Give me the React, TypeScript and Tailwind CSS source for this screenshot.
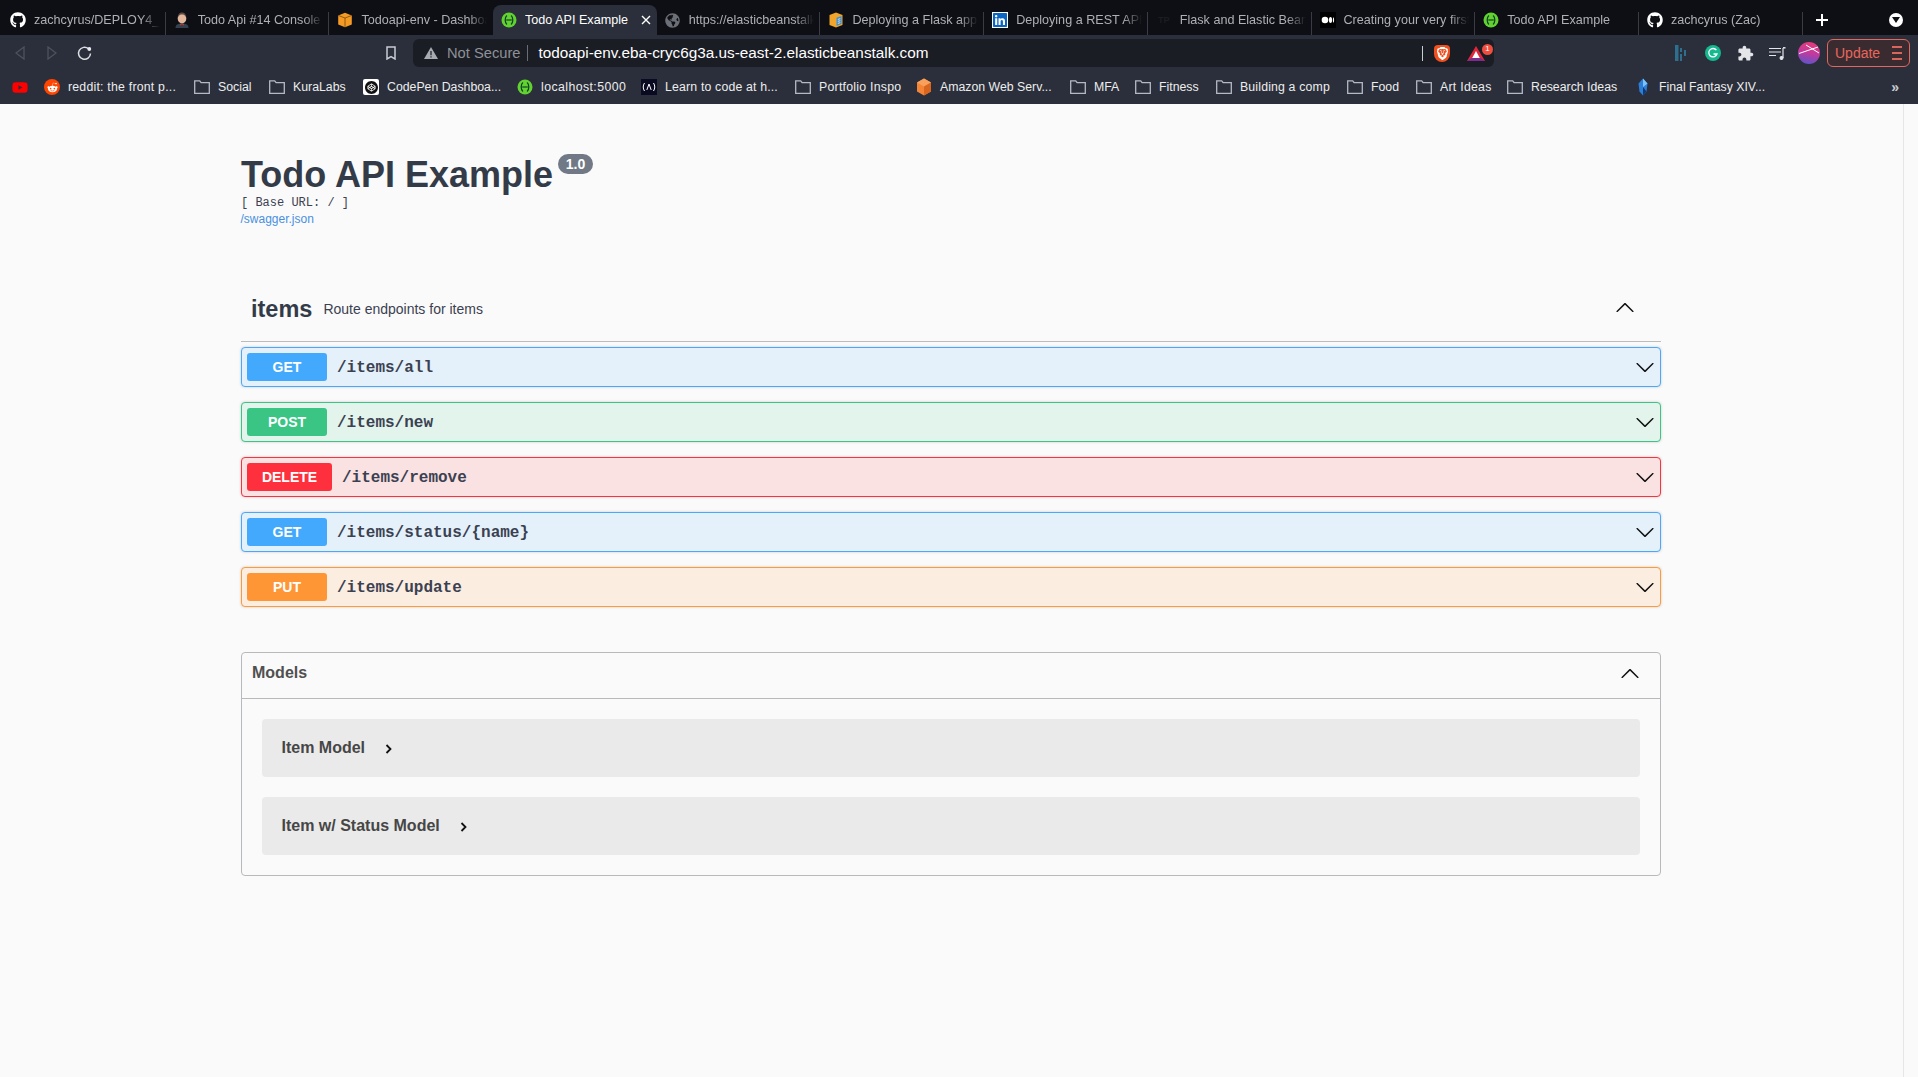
import React from "react";
import { FaGithub, FaYoutube, FaRedditAlien, FaLinkedin, FaGlobeAmericas } from "react-icons/fa";
import { SiBrave, SiCodepen } from "react-icons/si";

const Swagger = () => (
  <svg width="16" height="16" viewBox="0 0 16 16">
    <circle cx="8" cy="8" r="7.5" fill="#62d32e" />
    <path d="M6 3.500C3.600 5 3.600 11 6 12.500M10 3.500c2.400 1.500 2.400 7.500 0 9" fill="none" stroke="#14402f" strokeWidth="1.300" />
    <path d="M5.200 8h5.600" stroke="#14402f" strokeWidth="1.200" />
  </svg>
);
const Github = () => <FaGithub size={16} color="#ffffff" />;
const Jenkins = () => (
  <svg width="16" height="16" viewBox="0 0 16 16">
    <path d="M1.500 16c0-3.500 2.500-4.500 6.500-4.500s6.500 1 6.500 4.500z" fill="#33414f" />
    <ellipse cx="8" cy="6.500" rx="4.300" ry="5" fill="#e3b79b" />
    <path d="M3.700 5.500C4 1.500 6 .5 8 .5s4 1 4.300 5C11 3 9.500 2.500 8 2.500S5 3 3.700 5.500z" fill="#5b4a45" />
    <path d="M6 11.500l2 1 2-1v2l-2-.7-2 .7z" fill="#c0342f" />
  </svg>
);
const AwsBox = () => (
  <svg width="16" height="16" viewBox="0 0 16 16">
    <path d="M8 .8l6.800 2.600v9.200L8 15.200 1.200 12.600V3.400z" fill="#f59a23" />
    <path d="M1.200 3.400L8 6l6.800-2.600M8 6v9.200" fill="none" stroke="#7a4a0e" strokeWidth=".8" />
  </svg>
);
const FlaskDoc = () => (
  <svg width="16" height="16" viewBox="0 0 16 16">
    <path d="M8 .5l6.500 2.500v10L8 15.500 1.500 13V3z" fill="#f2a52b" />
    <path d="M8.500 5.800l5-1.800v8l-5 2z" fill="#3f8fd2" />
    <path d="M9.800 7.500l2.500-.9M9.800 9.500l2.500-.9M9.800 11.500l2.500-.9" stroke="#ffffff" strokeWidth=".7" />
  </svg>
);
const MediumIcon = () => (
  <svg width="16" height="16" viewBox="0 0 16 16">
    <rect width="16" height="16" fill="#000000" />
    <ellipse cx="5" cy="8" rx="3.300" ry="3.300" fill="#ffffff" />
    <ellipse cx="10.500" cy="8" rx="1.600" ry="3" fill="#ffffff" />
    <ellipse cx="13.500" cy="8" rx=".6" ry="2.700" fill="#ffffff" />
  </svg>
);
const TpIcon = () => (
  <span className="w-4 text-center text-[9px] font-bold leading-none text-[#1c1d20]">TP</span>
);

type Tab = { icon: React.ReactNode; title: string; active?: boolean; noDiv?: boolean };
const tabs: Tab[] = [
  { icon: <Github />, title: "zachcyrus/DEPLOY4_Flask" },
  { icon: <Jenkins />, title: "Todo Api #14 Console [Jenkins]" },
  { icon: <AwsBox />, title: "Todoapi-env - Dashboard", noDiv: true },
  { icon: <Swagger />, title: "Todo API Example", active: true, noDiv: true },
  { icon: <FaGlobeAmericas size={15} color="#6c6f76" />, title: "https://elasticbeanstalk.com" },
  { icon: <FlaskDoc />, title: "Deploying a Flask application" },
  { icon: <FaLinkedin size={16} color="#0a66c2" className="bg-white" />, title: "Deploying a REST API with" },
  { icon: <TpIcon />, title: "Flask and Elastic Beanstalk" },
  { icon: <MediumIcon />, title: "Creating your very first app" },
  { icon: <Swagger />, title: "Todo API Example" },
  { icon: <Github />, title: "zachcyrus (Zac)" },
];

const Folder = () => (
  <svg width="16" height="14" viewBox="0 0 16 14" fill="none" stroke="#b4b9c6" strokeWidth="1.300" className="shrink-0">
    <path d="M.7.8h5l1.400 1.800h8.200v10.700H.7z" />
  </svg>
);
const RedditIcon = () => (
  <span className="flex h-4 w-4 items-center justify-center rounded-full bg-[#ff4500]">
    <FaRedditAlien size={11} color="#ffffff" />
  </span>
);
const CodepenIcon = () => (
  <span className="flex h-4 w-4 items-center justify-center rounded-[2px] bg-white">
    <SiCodepen size={13} color="#111111" />
  </span>
);
const FccIcon = () => (
  <svg width="16" height="16" viewBox="0 0 16 16">
    <rect width="16" height="16" fill="#0a0a23" />
    <path d="M3.500 4C1.800 6.500 1.800 9.500 3.500 12M12.500 4c1.700 2.500 1.700 5.500 0 8M5.800 11L8 5l2.200 6" fill="none" stroke="#ffffff" strokeWidth="1" />
  </svg>
);
const AwsHex = () => (
  <svg width="16" height="18" viewBox="0 0 16 18">
    <path d="M8 .5l7 4v9l-7 4-7-4v-9z" fill="#f58536" />
    <path d="M8 .5l7 4-7 4-7-4z" fill="#f9a05c" />
    <path d="M8 8.500l7-4v9l-7 4z" fill="#d9661f" />
  </svg>
);
const Crystal = () => (
  <svg width="16" height="18" viewBox="0 0 16 18">
    <path d="M8 .5l4.500 5-1 8L8 17.500l-3.500-4-1-8z" fill="#2b7fd8" />
    <path d="M8 .5l4.500 5L8 9z" fill="#7cc4f5" />
    <path d="M8 9l3.500 4.500L8 17.500z" fill="#12386e" />
  </svg>
);

type Bm = { icon: React.ReactNode; text: string; cls: string };
const bookmarks: Bm[] = [
  { icon: <RedditIcon />, text: "reddit: the front p...", cls: "w-[150px] tracking-[0.22px]" },
  { icon: <Folder />, text: "Social", cls: "w-[75px]" },
  { icon: <Folder />, text: "KuraLabs", cls: "w-[94px]" },
  { icon: <CodepenIcon />, text: "CodePen Dashboa...", cls: "w-[154px]" },
  { icon: <Swagger />, text: "localhost:5000", cls: "w-[124px] tracking-[0.42px]" },
  { icon: <FccIcon />, text: "Learn to code at h...", cls: "w-[154px] tracking-[0.17px]" },
  { icon: <Folder />, text: "Portfolio Inspo", cls: "w-[121px] tracking-[0.25px]" },
  { icon: <AwsHex />, text: "Amazon Web Serv...", cls: "w-[154px]" },
  { icon: <Folder />, text: "MFA", cls: "w-[65px]" },
  { icon: <Folder />, text: "Fitness", cls: "w-[81px]" },
  { icon: <Folder />, text: "Building a comp", cls: "w-[131px] tracking-[0.16px]" },
  { icon: <Folder />, text: "Food", cls: "w-[69px]" },
  { icon: <Folder />, text: "Art Ideas", cls: "w-[91px] tracking-[0.27px]" },
  { icon: <Folder />, text: "Research Ideas", cls: "w-[128px]" },
  { icon: <Crystal />, text: "Final Fantasy XIV...", cls: "w-[130px]" },
];

const Arrow = ({ up }: { up?: boolean }) => (
  <svg width="20" height="20" viewBox="0 0 20 20" fill="#111111" className={up ? "rotate-180" : ""}>
    <path d="M17.418 6.109c.272-.268.709-.268.979 0s.271.701 0 .969l-7.908 7.830c-.27.268-.707.268-.979 0l-7.908-7.830c-.27-.268-.27-.701 0-.969.271-.268.709-.268.979 0L10 13.250l7.418-7.141z" />
  </svg>
);

type Op = { m: string; path: string; row: string; badge: string; wide?: boolean };
const ops: Op[] = [
  { m: "GET", path: "/items/all", row: "border-[#49a8fc] bg-[#e4f1fb]", badge: "bg-[#43a9fd]" },
  { m: "POST", path: "/items/new", row: "border-[#3cc487] bg-[#e2f4ec]", badge: "bg-[#3bc585]" },
  { m: "DELETE", path: "/items/remove", row: "border-[#f9323e] bg-[#fae1e2]", badge: "bg-[#fe303d]", wide: true },
  { m: "GET", path: "/items/status/{name}", row: "border-[#49a8fc] bg-[#e4f1fb]", badge: "bg-[#43a9fd]" },
  { m: "PUT", path: "/items/update", row: "border-[#fd9a3c] bg-[#fcede1]", badge: "bg-[#fe9636]" },
];

function Chrome() {
  return (
    <header className="shrink-0 bg-[#2b2f3b]">
      <div className="flex h-[35px] items-stretch bg-[#0d0f14] pl-[2px] pt-[5px]">
        {tabs.map((t, i) => (
          <div
            key={i}
            className={
              "relative flex w-[163.7px] shrink-0 items-center gap-2 pl-2 pr-[6px] " +
              (t.active ? "rounded-t-[8px] bg-[#2b2f3b] text-white" : "text-[#aeb0b5]")
            }
          >
            <span className="flex w-4 shrink-0 items-center justify-center">{t.icon}</span>
            <span
              className={
                "flex-1 overflow-hidden whitespace-nowrap text-[12.6px] " +
                (t.active ? "" : "[mask-image:linear-gradient(to_right,black_85%,transparent)]")
              }
            >
              {t.title}
            </span>
            {t.active && (
              <svg width="10" height="10" viewBox="0 0 10 10" className="shrink-0" stroke="#ffffff" strokeWidth="1.400">
                <path d="M1 1l8 8M9 1l-8 8" />
              </svg>
            )}
            {!t.noDiv && <span className="absolute bottom-0 right-0 top-[7px] w-px bg-[#3a3c44]" />}
          </div>
        ))}
        <div className="flex w-[38px] items-center justify-center">
          <svg width="14" height="14" viewBox="0 0 14 14" stroke="#ffffff" strokeWidth="2">
            <path d="M7 1v12M1 7h12" />
          </svg>
        </div>
        <div className="flex flex-1 items-center justify-end pr-[15px]">
          <span className="flex h-[14px] w-[14px] items-center justify-center rounded-full bg-white">
            <svg width="8" height="6" viewBox="0 0 8 6">
              <path d="M0 0h8L4 6z" fill="#0d0f14" />
            </svg>
          </span>
        </div>
      </div>

      <div className="flex h-[35px] items-center pl-[4px] pt-[1px]">
        <span className="flex w-8 justify-center">
          <svg width="10" height="14" viewBox="0 0 10 14" fill="none" stroke="#4e525e" strokeWidth="1.300">
            <path d="M9 1L1 7l8 6z" />
          </svg>
        </span>
        <span className="flex w-8 justify-center">
          <svg width="10" height="14" viewBox="0 0 10 14" fill="none" stroke="#4e525e" strokeWidth="1.300">
            <path d="M1 1l8 6-8 6z" />
          </svg>
        </span>
        <span className="flex w-8 justify-center">
          <svg width="15" height="15" viewBox="0 0 15 15" fill="none">
            <path d="M11.500 2.800A6 6 0 1 0 13.500 7.500" stroke="#dcdee2" strokeWidth="1.500" />
            <circle cx="12.300" cy="3" r="1.900" fill="#e8e9ec" />
          </svg>
        </span>
        <span className="ml-[275px] flex w-8 justify-center">
          <svg width="10" height="14" viewBox="0 0 10 14" fill="none" stroke="#c9ccd2" strokeWidth="1.500">
            <path d="M1 1h8v12l-4-2.400L1 13z" />
          </svg>
        </span>
        <div className="ml-[6px] flex h-[28px] w-[1081px] items-center rounded-[6px] bg-[#1b1d24] pl-[10px] pr-[9px]">
          <svg width="16" height="14" viewBox="0 0 16 14" className="shrink-0">
            <path d="M8 1l7 12H1z" fill="#a8abb1" />
            <path d="M8 5v4.200M8 10.300v1.200" stroke="#1b1d24" strokeWidth="1.200" />
          </svg>
          <span className="ml-2 text-[14.7px] text-[#8e9198]">Not Secure</span>
          <span className="ml-[7px] h-[16px] w-px bg-[#6a6d75]" />
          <span className="ml-[10px] text-[15.3px] text-white">todoapi-env.eba-cryc6g3a.us-east-2.elasticbeanstalk.com</span>
          <div className="ml-auto flex items-center">
            <span className="h-[15px] w-px bg-[#c9ccd2]" />
            <span className="ml-[11px] flex h-[17px] w-4 items-center justify-center rounded-b-lg rounded-t-sm bg-[#f1501f]">
              <SiBrave size={13} color="#ffffff" />
            </span>
            <span className="relative ml-[17px]">
              <svg width="18" height="15" viewBox="0 0 18 15" className="block">
                <path d="M9 0l9 15H0z" fill="#e0263c" />
                <path d="M0 15l4.500-3h9l4.500 3z" fill="#7a2d8e" />
                <path d="M9 5l3.800 7H5.200z" fill="#ffffff" />
              </svg>
              <span className="absolute -right-[8px] -top-[2px] flex h-[11px] w-[11px] items-center justify-center rounded-full bg-[#ef4d3f] text-[8px] leading-none text-white">
                1
              </span>
            </span>
          </div>
        </div>
        <span className="ml-[171px] flex w-8 justify-center">
          <svg width="12" height="16" viewBox="0 0 12 16" fill="#2d6f8c">
            <rect x="0" y="0" width="3.500" height="16" />
            <rect x="5" y="3" width="2" height="4" />
            <rect x="5" y="9" width="2" height="7" />
            <rect x="9" y="5" width="2" height="6" />
          </svg>
        </span>
        <span className="flex w-8 justify-center">
          <svg width="16" height="16" viewBox="0 0 16 16">
            <circle cx="8" cy="8" r="8" fill="#15b88f" />
            <path d="M11.400 5.200A4.200 4.200 0 1 0 12 9H8.500" fill="none" stroke="#ffffff" strokeWidth="1.300" />
          </svg>
        </span>
        <span className="flex w-8 justify-center">
          <svg width="17" height="17" viewBox="0 0 24 24" fill="#e4e5e8">
            <path d="M20.500 11H19V7c0-1.100-.9-2-2-2h-4V3.500C13 2.120 11.880 1 10.500 1S8 2.120 8 3.500V5H4c-1.100 0-1.990.9-1.990 2v3.800H3.500c1.490 0 2.700 1.210 2.700 2.700s-1.210 2.700-2.700 2.700H2V20c0 1.100.9 2 2 2h3.800v-1.500c0-1.490 1.210-2.700 2.700-2.700 1.490 0 2.700 1.210 2.700 2.700V22H17c1.100 0 2-.9 2-2v-4h1.500c1.380 0 2.500-1.120 2.500-2.500S21.880 11 20.500 11z" />
          </svg>
        </span>
        <span className="flex w-8 justify-center">
          <svg width="17" height="13" viewBox="0 0 17 13" fill="none" stroke="#e4e5e8" strokeWidth="1.200">
            <path d="M0 1.500h12M0 5h12M0 8.500h7" />
            <path d="M14 1v10" />
            <path d="M14 .8h2.500" strokeWidth="1.500" />
            <circle cx="12.500" cy="11" r="1.400" fill="#e4e5e8" />
          </svg>
        </span>
        <span className="flex w-8 justify-center">
          <svg width="22" height="22" viewBox="0 0 22 22">
            <defs>
              <linearGradient id="av" x1="0.600" y1="0" x2="0.400" y2="1">
                <stop offset="0" stopColor="#e63b7a" />
                <stop offset="0.500" stopColor="#c23a9e" />
                <stop offset="1" stopColor="#5f53c9" />
              </linearGradient>
            </defs>
            <circle cx="11" cy="11" r="11" fill="url(#av)" />
            <path d="M1 11.500L20 5M8 3l13 8" stroke="#ffffff" strokeWidth="1" fill="none" />
          </svg>
        </span>
        <button className="ml-[2px] flex h-[28px] w-[83px] items-center rounded-[6px] border border-[#e0685e] bg-[#3a2b30] pl-[7px] text-[14px] text-[#e8675c]">
          Update
          <svg width="10" height="14" viewBox="0 0 10 14" stroke="#d9665c" strokeWidth="1.800" className="ml-[12px]">
            <path d="M0 1h10M0 7h10M0 13h10" />
          </svg>
        </button>
      </div>

      <div className="flex h-[34px] items-center pl-[12px] text-[12.3px] text-[#eceded]">
        <span className="mr-4 flex w-4 justify-center">
          <FaYoutube size={17} color="#ff0000" />
        </span>
        {bookmarks.map((b, i) => (
          <div key={i} className={"flex shrink-0 items-center gap-2 whitespace-nowrap " + b.cls}>
            <span className="flex w-4 shrink-0 items-center justify-center">{b.icon}</span>
            <span>{b.text}</span>
          </div>
        ))}
        <span className="ml-auto pr-[19px] text-[14px] font-bold leading-none text-[#c9ccd2]">»</span>
      </div>
    </header>
  );
}

function OpRow({ op }: { op: Op }) {
  return (
    <div className={"flex h-10 items-center rounded-[4px] border pl-[5px] pr-[5px] shadow-[0_0_3px_rgba(0,0,0,0.19)] " + op.row}>
      <span
        className={
          "flex h-[28px] items-center justify-center rounded-[3px] text-[14px] font-bold text-white " +
          (op.wide ? "w-[85px] " : "w-20 ") +
          op.badge
        }
      >
        {op.m}
      </span>
      <span className="ml-[10px] mt-[2px] font-['Liberation_Mono',monospace] text-[16px] font-bold text-[#3b4151]">{op.path}</span>
      <span className="ml-auto">
        <Arrow />
      </span>
    </div>
  );
}

function ModelRow({ name }: { name: string }) {
  return (
    <div className="flex h-[58px] items-center rounded-[4px] bg-[#eaeaea] pl-[19.5px]">
      <span className="text-[16px] font-bold text-[#464646]">{name}</span>
      <svg width="8" height="10" viewBox="0 0 8 10" fill="none" stroke="#111111" strokeWidth="1.800" className="ml-[20px] mt-[2px]">
        <path d="M1.500 1l4 4-4 4" />
      </svg>
    </div>
  );
}

export default function App() {
  return (
    <div className="flex h-[1077px] flex-col overflow-hidden bg-[#fafafa] font-['Liberation_Sans',Arial,sans-serif]">
      <Chrome />
      <div className="flex flex-1">
        <main className="flex-1 pl-[241px] pt-[49px]">
          <div className="w-[1420px]">
            <div className="flex items-start">
              <h1 className="text-[36px] font-bold leading-[44px] text-[#333b49]">Todo API Example</h1>
              <span className="ml-[5px] mt-[1px] flex h-5 w-[35px] items-center justify-center rounded-full bg-[#707985] text-[14px] font-bold text-white">
                1.0
              </span>
            </div>
            <div className="font-['Liberation_Mono',monospace] text-[12px] leading-[13px] text-[#3b4151]">[ Base URL: / ]</div>
            <a className="-ml-[0.5px] mt-[2px] block text-[12px] leading-[14px] text-[#4990e2]">/swagger.json</a>

            <div className="mt-[55px] flex h-[61px] items-center border-b border-[#bcbcbc] pb-[2px] pl-[10px] pr-[26px]">
              <h2 className="text-[23.5px] font-bold text-[#333b49]">items</h2>
              <span className="ml-[11px] -mt-[1px] text-[14px] text-[#3b4151]">Route endpoints for items</span>
              <span className="ml-auto -mt-[4px]">
                <Arrow up />
              </span>
            </div>

            <div className="mt-[5px] flex flex-col gap-[15px]">
              {ops.map((op, i) => (
                <OpRow key={i} op={op} />
              ))}
            </div>

            <section className="mt-[45px] h-[224px] rounded-[4px] border border-[#b8b9bd]">
              <div className="flex h-[46px] items-center border-b border-[#b8b9bd] pl-[10px] pr-[20px]">
                <h3 className="-mt-[6px] text-[16px] font-bold text-[#505050]">Models</h3>
                <span className="ml-auto -mt-[3px]">
                  <Arrow up />
                </span>
              </div>
              <div className="flex flex-col gap-5 px-5 pt-5">
                <ModelRow name="Item Model" />
                <ModelRow name="Item w/ Status Model" />
              </div>
            </section>
          </div>
        </main>
        <aside className="w-[15px] shrink-0 border-l border-[#e6e6e6]" />
      </div>
    </div>
  );
}
